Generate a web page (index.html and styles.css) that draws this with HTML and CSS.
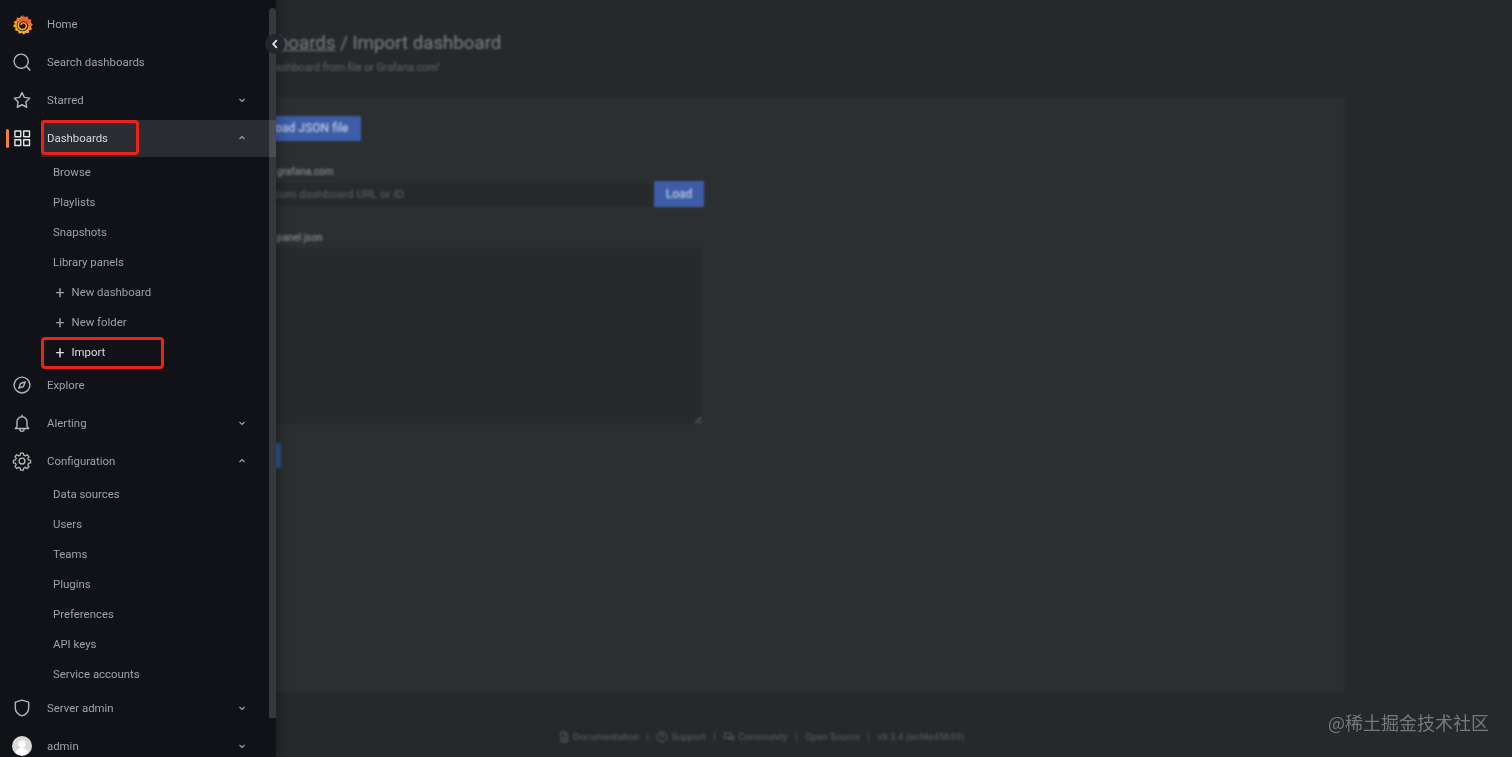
FILE: index.html
```html
<!DOCTYPE html>
<html lang="en">
<head>
<meta charset="utf-8">
<title>Import dashboard</title>
<link rel="stylesheet" href="styles.css">
</head>
<body>
<main class="main">
  <div class="blurred">
    <div class="page">
      <header class="page-head">
        <h1 class="title"><a class="title-link">Dashboards</a> / Import dashboard</h1>
        <p class="subtitle">Import dashboard from file or Grafana.com"</p>
      </header>
      <section class="panel">
        <button class="btn btn-upload">Upload JSON file</button>
        <label class="label label-first">Import via grafana.com</label>
        <div class="input-row">
          <input class="input" placeholder="Grafana.com dashboard URL or ID">
          <button class="btn btn-load">Load</button>
        </div>
        <label class="label label-second">Import via panel json</label>
        <textarea class="textarea"></textarea>
        <button class="btn btn-submit">Load</button>
      </section>
    </div>
    <footer class="footer">
      <svg class="fi" viewBox="0 0 24 24"><path d="M6 2h8l5 5v15H6zM14 2v5h5M9 13h7M9 17h7"/></svg><span>Documentation</span><i>|</i>
      <svg class="fi" viewBox="0 0 24 24"><circle cx="12" cy="12" r="10"/><path d="M9 9a3 3 0 1 1 3 3v2M12 17v1"/></svg><span>Support</span><i>|</i>
      <svg class="fi" viewBox="0 0 24 24"><path d="M3 4h13v9H8l-4 3zM10 16h8l3 3v-9h-2"/></svg><span>Community</span><i>|</i>
      <span>Open Source</span><i>|</i>
      <span>v9.3.4 (ecf4e45659)</span>
    </footer>
  </div>
</main>

<aside class="sidebar">
  <nav class="nav">
    <a class="row">
      <span class="icon">
        <svg class="logo" viewBox="0 0 24 24">
          <defs><linearGradient id="gf" x1="0.2" y1="1" x2="0.8" y2="0"><stop offset="0" stop-color="#f9c21f"/><stop offset=".55" stop-color="#f58a26"/><stop offset="1" stop-color="#ee4f2b"/></linearGradient></defs>
          <path fill="url(#gf)" d="M13 .8l1.700 3 3.300-1.300.6 3.400 3.400.4-.6 3.400 2.400 2.300-2.200 2.500 1.300 3.100-3.200 1-.5 3.300-3.300-.6L13.500 23.500 11 21.300l-3 1.300-1-3.200-3.400-.4.500-3.300L1 14.100l2.200-2.600L2 8.500l3.200-1.100.4-3.300 3.300.4 1.700-2.800 2.200 1.900z"/>
          <circle cx="12" cy="13" r="6.600" fill="#111217"/>
          <path fill="none" stroke="url(#gf)" stroke-width="2" d="M18.800 11.200a6 6 0 0 0-11.600 1.800 4.800 4.800 0 0 0 4.800 4.800 4.400 4.400 0 0 0 4.400-4.400 3.400 3.400 0 0 0-3.400-3.400 2.500 2.500 0 0 0-2.500 2.500"/>
        </svg>
      </span>
      <span class="text">Home</span>
    </a>
    <a class="row">
      <span class="icon"><svg class="ic" viewBox="0 0 24 24"><circle cx="11" cy="11" r="8.500"/><path d="M17.200 17.200L21.500 21.500"/></svg></span>
      <span class="text">Search dashboards</span>
    </a>
    <a class="row">
      <span class="icon"><svg class="ic" viewBox="0 0 24 24"><path d="M12 3l2.800 5.900 6.400.9-4.600 4.500 1.100 6.400L12 17.700l-5.700 3 1.100-6.400-4.600-4.500 6.400-.9z"/></svg></span>
      <span class="text">Starred</span>
      <svg class="chev" viewBox="0 0 10 10"><path d="M2.500 4l2.500 2.500L7.500 4"/></svg>
    </a>
    <a class="row row-active">
      <span class="active-bar"></span>
      <span class="icon"><svg class="ic ic-bright" viewBox="0 0 24 24"><rect x="3.500" y="3.500" width="7" height="7"/><rect x="14" y="3.500" width="7" height="7"/><rect x="3.500" y="14" width="7" height="7"/><rect x="14" y="14" width="7" height="7"/></svg></span>
      <span class="text text-active">Dashboards</span>
      <svg class="chev" viewBox="0 0 10 10"><path d="M2.500 6L5 3.500 7.500 6"/></svg>
      <span class="mark mark-dash"></span>
    </a>
    <div class="sub sub-first">
      <a class="sub-row">Browse</a>
      <a class="sub-row">Playlists</a>
      <a class="sub-row">Snapshots</a>
      <a class="sub-row">Library panels</a>
      <a class="sub-row"><span class="plus">+</span>New dashboard</a>
      <a class="sub-row"><span class="plus">+</span>New folder</a>
      <a class="sub-row sub-current"><span class="plus">+</span>Import<span class="mark mark-import"></span></a>
    </div>
    <a class="row">
      <span class="icon"><svg class="ic" viewBox="0 0 24 24"><circle cx="12" cy="12" r="9.500"/><path d="M15.800 8.200l-2 5.600-5.600 2 2-5.600z"/></svg></span>
      <span class="text">Explore</span>
    </a>
    <a class="row">
      <span class="icon"><svg class="ic" viewBox="0 0 24 24"><path d="M6 16v-5.500a6 6 0 0 1 12 0V16l2 2.500H4zM12 2.500v2M9.500 18.500v1a2.500 2.500 0 0 0 5 0v-1"/></svg></span>
      <span class="text">Alerting</span>
      <svg class="chev" viewBox="0 0 10 10"><path d="M2.500 4l2.500 2.500L7.500 4"/></svg>
    </a>
    <a class="row">
      <span class="icon"><svg class="ic" viewBox="0 0 24 24"><circle cx="12" cy="12" r="3.500"/><path d="M10.200 2.500h3.600l.6 2.800 1.900.8 2.400-1.500 2.400 2.500-1.500 2.400.8 1.800 2.800.6v3.400l-2.800.6-.8 1.900 1.500 2.400-2.500 2.400-2.400-1.500-1.800.8-.6 2.800h-3.600l-.6-2.800-1.900-.8-2.400 1.500-2.400-2.500 1.500-2.400-.8-1.800-2.800-.6v-3.400l2.800-.6.800-1.900-1.500-2.400 2.500-2.400 2.400 1.500 1.800-.8z" transform="translate(12 12) scale(.92) translate(-12 -12.800)"/></svg></span>
      <span class="text">Configuration</span>
      <svg class="chev" viewBox="0 0 10 10"><path d="M2.500 6L5 3.500 7.500 6"/></svg>
    </a>
    <div class="sub sub-last">
      <a class="sub-row">Data sources</a>
      <a class="sub-row">Users</a>
      <a class="sub-row">Teams</a>
      <a class="sub-row">Plugins</a>
      <a class="sub-row">Preferences</a>
      <a class="sub-row">API keys</a>
      <a class="sub-row">Service accounts</a>
    </div>
    <a class="row">
      <span class="icon"><svg class="ic" viewBox="0 0 24 24"><path d="M12 2.500l8 2.500v7c0 5-3.500 8-8 9.500-4.500-1.500-8-4.500-8-9.500V5z"/></svg></span>
      <span class="text">Server admin</span>
      <svg class="chev" viewBox="0 0 10 10"><path d="M2.500 4l2.500 2.500L7.500 4"/></svg>
    </a>
    <a class="row">
      <span class="icon"><svg class="avatar" viewBox="0 0 20 20"><circle cx="10" cy="10" r="10" fill="#d9d9d9"/><circle cx="10" cy="8" r="3.800" fill="#fff"/><path d="M3.500 17c1-4 3.500-5 6.500-5s5.500 1 6.500 5a10 10 0 0 1-13 0z" fill="#fff"/></svg></span>
      <span class="text">admin</span>
      <svg class="chev" viewBox="0 0 10 10"><path d="M2.500 4l2.500 2.500L7.500 4"/></svg>
    </a>
  </nav>
  <span class="scrollbar"></span>
</aside>
<button class="collapse"><svg viewBox="0 0 10 10"><path d="M6.500 1.800L3.500 5l3 3.200"/></svg></button>
<div class="watermark">@稀土掘金技术社区</div>
</body>
</html>
```
FILE: styles.css
```css
* { box-sizing: border-box; }
html, body { margin: 0; height: 100%; overflow: hidden; }
body { background: #26282c; font-family: Roboto, "Liberation Sans", sans-serif; color: #ccc; }

/* blurred page behind the menu */
.main { height: 757px; overflow: hidden; }
.blurred { filter: blur(1px); }
.page { padding: 0 167px 0 197px; }
.page-head { padding: 30px 0 0 38.500px; height: 97px; }
.title { margin: 0; font-size: 18.700px; line-height: 26px; font-weight: 400; color: #7e8083; }
.title-link { text-decoration: underline; }
.subtitle { margin: 5px 0 0; font-size: 10.600px; line-height: 14px; color: #66686b; }
.panel { height: 595px; background: #2c2f30; padding: 19px 30px 0; display: flex; flex-direction: column; align-items: flex-start; }
.btn { border: 0; border-radius: 1px; background: #3d5da8; color: #bcc7df; font: 500 12px Roboto, sans-serif; padding: 0; }
.btn-upload { width: 134px; height: 25px; padding: 0 0 2px 18px; }
.label { margin-left: 2px; font-size: 10px; line-height: 12px; font-weight: 500; color: #85878a; }
.label-first { margin-top: 25px; }
.label-second { margin-top: 25px; }
.input-row { display: flex; align-items: center; width: 477px; margin-top: 3px; }
.input { flex: 1; height: 23px; border: 0; background: #27292c; padding: 0 3px; font: 11.500px Roboto, sans-serif; outline: none; min-width: 0; }
.input::placeholder { color: #5f6164; opacity: 1; }
.btn-load { width: 50px; height: 26px; }
.textarea { display: block; width: 475px; height: 176px; margin-top: 4px; border: 0; background: #27292c; outline: none; resize: vertical; }
.btn-submit { width: 54px; height: 25px; margin-top: 19px; background: #324d8c; }

.footer { display: flex; justify-content: center; align-items: center; gap: 3px; padding: 38px 0 0 10px; font-size: 9.700px; line-height: 14px; color: #5e6063; }
.footer i { font-style: normal; margin: 0 4.500px; }
.fi { width: 12px; height: 12px; fill: none; stroke: #5e6063; stroke-width: 2; }

/* menu */
.sidebar { position: absolute; left: 0; top: 0; width: 276px; height: 757px; background: #111217; overflow: hidden; box-shadow: 5px 0 9px rgba(0,0,0,.22); }
.nav { padding-top: 5px; filter: blur(.3px); }
.row { position: relative; display: flex; align-items: center; height: 38px; font-size: 11.400px; color: #a0a1a4; }
.row-active::before { content: ""; position: absolute; left: 41px; right: 0; top: 1px; bottom: 0; background: #2a2b33; }
.icon { position: relative; width: 44px; height: 38px; display: flex; align-items: center; justify-content: center; flex: none; }
.text { position: relative; margin-left: 3px; flex: 1; }
.text-active { color: #d8d9dc; }
.ic { width: 20px; height: 20px; fill: none; stroke: #b4b5b8; stroke-width: 1.700; stroke-linejoin: round; stroke-linecap: round; }
.ic-bright { stroke: #e4e5e8; }
.logo { width: 21px; height: 21px; }
.avatar { width: 20px; height: 20px; }
.chev { position: relative; width: 10px; height: 10px; margin-right: 29px; flex: none; fill: none; stroke: #a0a1a4; stroke-width: 1.100; }
.active-bar { position: absolute; left: 6px; top: 10px; width: 3px; height: 19px; background: #f0803c; border-radius: 2px; }
.sub-first { margin-bottom: -1px; }
.sub-last { margin-top: -1px; }
.sub-row { position: relative; display: flex; align-items: center; height: 30px; padding-left: 53px; font-size: 11.400px; color: #a0a1a4; }
.plus { width: 14px; margin-right: 4.500px; font-size: 16px; font-weight: 400; text-align: center; }
.sub-current { color: #dedfe2; }
.mark { position: absolute; border: 3px solid #e8231b; border-radius: 4px; }
.mark-dash { left: 41px; top: 1px; width: 98px; height: 35px; }
.mark-import { left: 41px; top: 0; width: 123px; height: 32px; }
.scrollbar { position: absolute; left: 269px; top: 8px; width: 7px; height: 710px; background: rgba(255,255,255,.16); border-radius: 4px 4px 0 0; }
.collapse { position: absolute; left: 265px; top: 34px; width: 20px; height: 20px; padding: 0; border: 0; border-radius: 50%; background: #22252b; display: flex; align-items: center; justify-content: center; }
.collapse svg { width: 12px; height: 12px; fill: none; stroke: #e6e7e9; stroke-width: 1.500; }
.watermark { position: absolute; right: 23px; top: 711px; font: 18px/22px "Noto Sans CJK SC", sans-serif; color: #76787a; }
```
